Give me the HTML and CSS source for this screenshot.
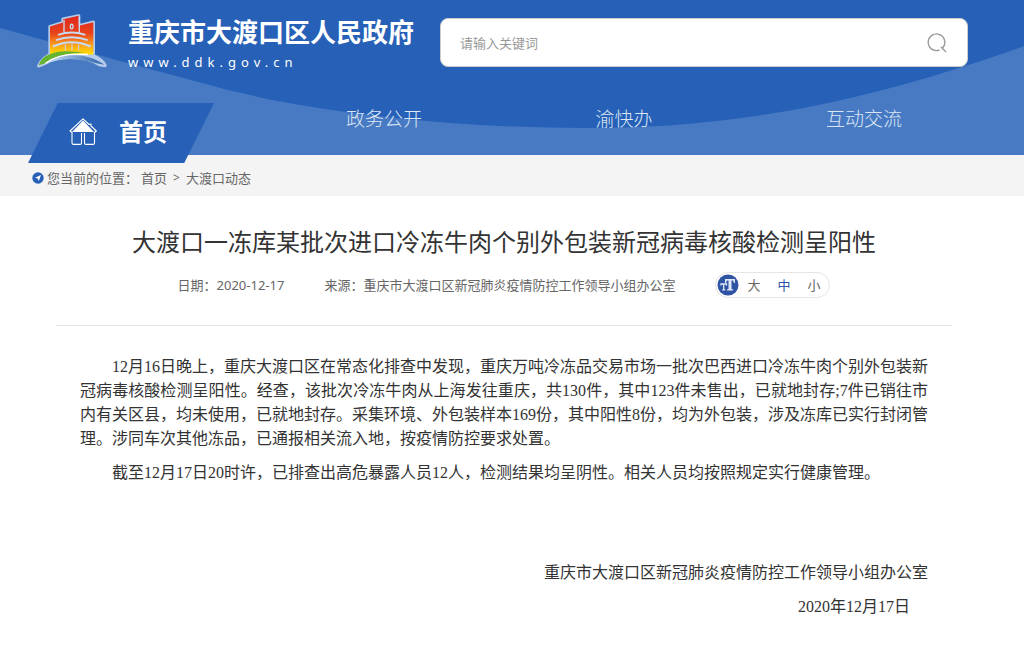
FILE: index.html
```html
<!doctype html>
<html lang="zh-CN">
  <head>
    <meta charset="utf-8">
    <title>大渡口一冻库某批次进口冷冻牛肉个别外包装新冠病毒核酸检测呈阳性</title>
    <meta name="viewport" content="width=device-width, initial-scale=1.0"/>
    <link rel="stylesheet" href="styles.css">
  </head>
  <body>

    <header class="header">
        <svg class="header-bg" viewBox="0 0 1024 155" preserveAspectRatio="none" aria-hidden="true">
            <path fill="#2660b7" d="M0 0H1024V46C850 108 720 128 590 128Q420 128 272 100L228 90L120 61L0 28Z"/>
        </svg>

        <div class="top">
            <a class="logo" href="#">
                <svg class="logo-mark" viewBox="50 38 216 171" aria-hidden="true">
                    <defs>
                        <linearGradient id="tower" x1="0" y1="0" x2="0" y2="1">
                            <stop offset="0" stop-color="#e0261c"/>
                            <stop offset=".45" stop-color="#e8431c"/>
                            <stop offset=".75" stop-color="#f9a01b"/>
                            <stop offset="1" stop-color="#ffe000"/>
                        </linearGradient>
                        <linearGradient id="river" x1="0" y1="0" x2="1" y2="0">
                            <stop offset="0" stop-color="#c3dcf2"/>
                            <stop offset="1" stop-color="#2a5fa8"/>
                        </linearGradient>
                    </defs>
                    <g fill="#b4cbec" stroke="#b4cbec" stroke-width="10" stroke-linejoin="round">
                        <path d="M92 80L131 68V58L178 48V78L222 67V162H92Z"/>
                        <path d="M58 198C75 160 120 152 155 154C200 156 245 170 257 197L240 194C200 168 120 165 78 190Z"/>
                    </g>
                    <path fill="url(#tower)" d="M92 80L131 68V58L178 48V78L222 67V164H92Z"/>
                    <g fill="none" stroke="#c9daf2">
                        <path stroke-width="4" d="M134 60V98M180 50V98"/>
                        <ellipse cx="157" cy="80" rx="4" ry="7" stroke-width="4"/>
                        <path stroke-width="6" d="M116 105Q157 91 198 105M110 121Q157 103 205 121M101 140Q157 114 214 140"/>
                        <path stroke-width="3" d="M138 134V152M158 130V152M178 134V152"/>
                    </g>
                    <path fill="url(#river)" d="M92 187C125 162 200 155 255 195C214 188 160 165 92 187Z"/>
                    <path fill="#65b32e" d="M58 196C70 156 128 146 200 160C140 158 100 172 76 191Z"/>
                    <path fill="none" stroke="#fff" stroke-width="4" d="M78 191C112 163 160 160 206 164"/>
                </svg>
                <span class="logo-text">
                    <strong class="logo-name">重庆市大渡口区人民政府</strong>
                    <span class="logo-url">www.ddk.gov.cn</span>
                </span>
            </a>

            <form class="search" id="search">
                <input class="search-input" type="text" placeholder="请输入关键词" aria-label="请输入关键词" autocomplete="off"/>
                <button class="search-button" type="submit" aria-label="搜索">
                    <svg width="20" height="20" viewBox="0 0 20 20" aria-hidden="true">
                        <path fill="none" stroke="#999" stroke-width="1.4" d="M12.500 17A8.300 8.300 0 1 1 15.500 15M14 14L19 19"/>
                    </svg>
                </button>
            </form>
        </div>

        <nav class="nav">
            <a class="nav-home" href="#">
                <svg width="28" height="27" viewBox="0 0 28 27" aria-hidden="true">
                    <path fill="#fff" d="M14 2.500L25 14H3Z"/>
                    <path fill="none" stroke="#fff" stroke-width="1.1" stroke-linejoin="round" d="M3 14.500L1 13L14 .8L20 6.500L22 6V8L27.300 13L25 15M3 14V25Q3 26.400 4.500 26.400H11Q12.500 26.400 12.500 25V15M15.500 15V25Q15.500 26.400 17 26.400H24Q25.500 26.400 25.500 25V14"/>
                </svg>
                首页
            </a>
            <a class="nav-item" href="#">政务公开</a>
            <a class="nav-item" href="#">渝快办</a>
            <a class="nav-item" href="#">互动交流</a>
        </nav>
    </header>

    <div class="crumbs">
        <svg width="12" height="12" viewBox="0 0 12 12" aria-hidden="true">
            <circle cx="6" cy="6" r="5.700" fill="#2660b7"/>
            <path fill="#fff" d="M9 3L6.800 9L5.600 6.600L3 5.800Z"/>
        </svg>
        <span>您当前的位置：</span>
        <a href="#">首页</a>
        <span class="crumbs-sep">&gt;</span>
        <a href="#">大渡口动态</a>
    </div>

    <main class="article">
        <h1 class="title">大渡口一冻库某批次进口冷冻牛肉个别外包装新冠病毒核酸检测呈阳性</h1>

        <div class="meta">
            <span>日期：2020-12-17</span>
            <span>来源：重庆市大渡口区新冠肺炎疫情防控工作领导小组办公室</span>
            <div class="sizes">
                <svg width="22" height="22" viewBox="0 0 22 22" aria-hidden="true">
                    <circle cx="11" cy="11" r="10.500" fill="#2f54a4"/>
                    <path fill="#dfe7f7" d="M8 5H18V9H17L16 6.500H14.500V15L16 15.500V16.500H10V15.500L11.500 15V6.500H10L9 9H8Z"/>
                    <path fill="none" stroke="#dfe7f7" stroke-width="1.300" d="M4 11.500V10H9.500V11.500M6.700 10V15.500M5.300 15.800H8.200"/>
                </svg>
                <button type="button" data-size="18">大</button>
                <button class="on" type="button" data-size="16">中</button>
                <button type="button" data-size="14">小</button>
            </div>
        </div>

        <div class="content" id="content">
            <p>12月16日晚上，重庆大渡口区在常态化排查中发现，重庆万吨冷冻品交易市场一批次巴西进口冷冻牛肉个别外包装新冠病毒核酸检测呈阳性。经查，该批次冷冻牛肉从上海发往重庆，共130件，其中123件未售出，已就地封存;7件已销往市内有关区县，均未使用，已就地封存。采集环境、外包装样本169份，其中阳性8份，均为外包装，涉及冻库已实行封闭管理。涉同车次其他冻品，已通报相关流入地，按疫情防控要求处置。</p>
            <p>截至12月17日20时许，已排查出高危暴露人员12人，检测结果均呈阴性。相关人员均按照规定实行健康管理。</p>
            <div class="sign">
                <p>重庆市大渡口区新冠肺炎疫情防控工作领导小组办公室</p>
                <p class="sign-date">2020年12月17日</p>
            </div>
        </div>
    </main>

    <script>
    //FONT SIZE
    var content = document.getElementById("content");
    var sizes = document.querySelectorAll(".sizes button");

    for(var i=0;i<sizes.length;i++){
        sizes[i].addEventListener("click", onSize);
    }

    function onSize(event) {
        for(var i=0;i<sizes.length;i++){
            sizes[i].classList.remove("on");
        }
        event.target.classList.add("on");
        content.style.fontSize = event.target.dataset.size + "px";
    }

    document.getElementById("search").addEventListener("submit", function(event){
        event.preventDefault();
    });
    </script>

  </body>
</html>
```
FILE: styles.css
```css
html {
    box-sizing: border-box;
}
*, *:before, *:after {
    box-sizing: inherit;
}

body{
    font-family: "Noto Sans", "Noto Sans CJK SC", sans-serif;
    font-size: 13px;
    line-height: 20px;
    color:#666;
    background-color:#fff;
    margin:0;
}
a{
    color: inherit;
    text-decoration: none;
}
button{
    font: inherit;
    color: inherit;
    background: none;
    border: 0;
    padding: 0;
    cursor: pointer;
}
svg{
    display: block;
    flex: none;
}

/* header */
.header{
    position: relative;
    background-color:#487ac3;
    color:#fff;
}
.header-bg{
    position: absolute;
    top:0;
    left:0;
    width:100%;
    height:100%;
}
.top{
    position: relative;
    display: flex;
    align-items: flex-start;
    gap: 26px;
    padding: 12px 56px 0 36px;
}
.logo{
    display: flex;
    gap: 20px;
}
.logo-mark{
    width:72px;
    height:58px;
}
.logo-text{
    display: flex;
    flex-direction: column;
}
.logo-name{
    font-size: 26px;
    line-height: 40px;
    white-space: nowrap;
}
.logo-url{
    font-size: 13px;
    line-height: 20px;
    letter-spacing: 5px;
}
.search{
    flex: 1;
    display: flex;
    height: 49px;
    margin-top: 6px;
    background-color:#fff;
    border: 1px solid #ccc;
    border-radius: 8px;
}
.search-input{
    flex: 1;
    min-width: 0;
    font: inherit;
    color:#666;
    background: none;
    border: 0;
    outline: 0;
    padding: 0 19px;
}
.search-input::placeholder{
    color:#999;
}
.search-button{
    padding: 0 20px;
}

.nav{
    position: relative;
    display: grid;
    grid-template-columns: repeat(4, 1fr);
    height: 52px;
    margin-top: 31px;
    padding: 0 40px 0 24px;
}
.nav-item{
    font-size: 19px;
    font-weight: 300;
    line-height: 32px;
    text-align: center;
    color:#dce6f5;
}
.nav-home{
    display: flex;
    align-items: center;
    gap: 22px;
    width: 186px;
    height: 60px;
    margin-left: 4px;
    padding: 0 0 3px 41px;
    background-color:#2660b7;
    clip-path: polygon(16% 0, 100% 0, 84% 100%, 0 100%);
    font-size: 24px;
    font-weight: bold;
}

/* breadcrumbs */
.crumbs{
    display: flex;
    align-items: center;
    gap: 3px;
    height: 41px;
    padding: 5px 32px 0;
    background-color:#f4f4f4;
}
.crumbs-sep{
    margin: 0 3px;
    font-size: 12px;
}

/* article */
.article{
    margin: 0 72px 0 56px;
    padding: 28px 0;
}
.title{
    margin: 0;
    font-size: 24px;
    line-height: 36px;
    font-weight: normal;
    text-align: center;
    color:#333;
}
.meta{
    display: flex;
    justify-content: center;
    align-items: center;
    gap: 40px;
    padding: 12px 0 27px;
    border-bottom: 1px solid #e5e5e5;
}
.sizes{
    display: flex;
    align-items: center;
    gap: 17px;
    height: 26px;
    padding: 0 9px 0 1px;
    border: 1px solid #e5e5e5;
    border-radius: 13px;
}
.sizes svg{
    margin-right: -9px;
}
.sizes .on{
    color:#2f54a4;
}
.content{
    padding: 29px 24px 0;
    font-family: "Liberation Serif", "Noto Sans CJK SC", serif;
    font-size: 16px;
    line-height: 24px;
    color:#333;
}
.content p{
    margin: 0 0 10px;
    text-indent: 2em;
    text-align: justify;
}
.content .sign{
    margin-top: 76px;
}
.content .sign p{
    text-indent: 0;
    text-align: right;
}
.content .sign .sign-date{
    padding-right: 18px;
}
```
